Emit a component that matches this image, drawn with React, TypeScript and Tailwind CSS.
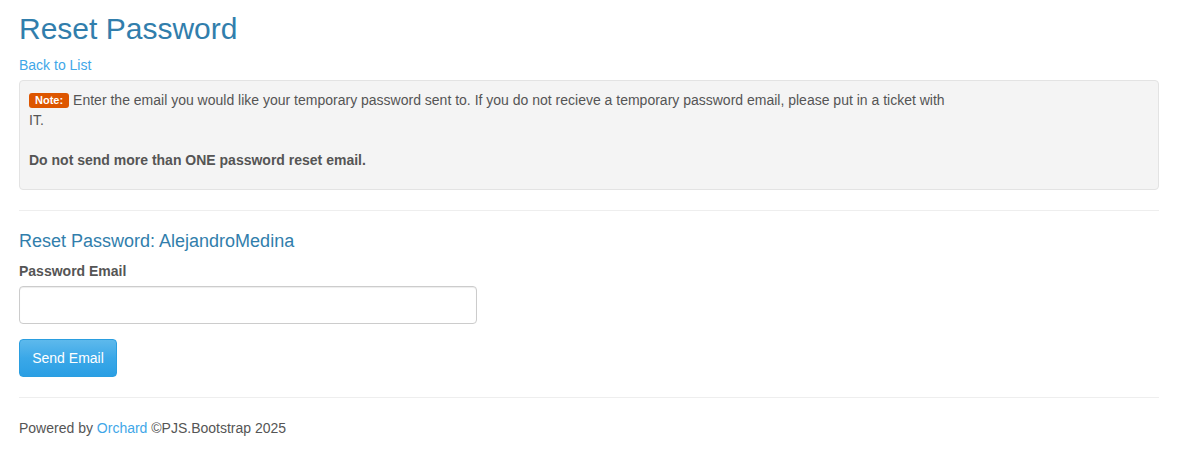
export default function App() {
  return (
    <div className="min-h-screen bg-white px-[19px] text-[14px] leading-5 text-[#555] [font-family:'Liberation_Sans',Arial,sans-serif]">
      <div className="w-[1140px]">
        <h1 className="pt-[12px] text-[30px] leading-[33px] text-[#317eac]">Reset Password</h1>
        <a href="#" className="mt-[10px] block w-fit text-[#3fa7e8]">
          Back to List
        </a>

        <div className="mt-[5px] h-[110px] rounded-[4px] border border-[#e3e3e3] bg-[#f4f4f4] px-[9px] pt-[9px]">
          <p>
            <span className="mr-[4px] inline-block rounded-[3px] bg-[#dd5600] px-[6px] align-[1px] text-[11px] font-bold leading-[15px] text-white">
              Note:
            </span>
            Enter the email you would like your temporary password sent to. If you do not recieve a temporary password email, please put in a ticket with
            <br />
            IT.
            <br />
            <br />
            <b>Do not send more than ONE password reset email.</b>
          </p>
        </div>

        <hr className="mt-[20px] border-t border-[#eee]" />

        <h4 className="mt-[20px] text-[18px] leading-5 text-[#317eac]">Reset Password: AlejandroMedina</h4>
        <label className="mt-[10px] block font-bold">Password Email</label>
        <input
          type="email"
          className="mt-[5px] block h-[38px] w-[458px] rounded-[4px] border border-[#ccc] bg-white px-3 shadow-[inset_0_1px_1px_rgba(0,0,0,0.075)] outline-none"
        />
        <button className="mt-[15px] block h-[38px] w-[98px] rounded-[4px] border border-[#2a9ee0] bg-gradient-to-b from-[#5db9ec] via-[#3aa8e8] to-[#2a9fe4] text-[14px] text-white">
          Send Email
        </button>

        <hr className="mt-[20px] border-t border-[#eee]" />

        <p className="mt-[20px]">
          Powered by <a href="#" className="text-[#3fa7e8]">Orchard</a> ©PJS.Bootstrap 2025
        </p>
      </div>
    </div>
  );
}
